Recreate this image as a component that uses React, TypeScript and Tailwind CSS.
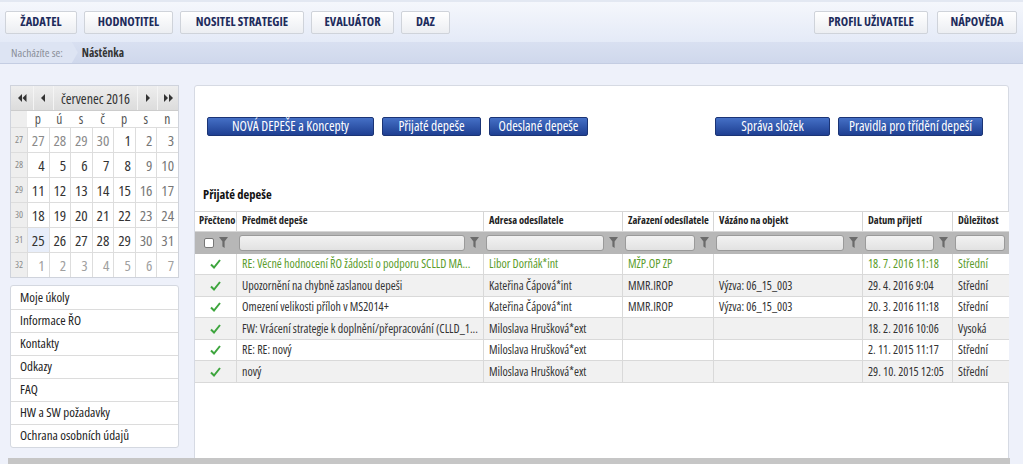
import React from "react";

const FONT = "font-['Open_Sans',Roboto,sans-serif] [font-stretch:75%]";

const topLeft = [
  { label: "ŽADATEL", w: "w-[72px]" },
  { label: "HODNOTITEL", w: "w-[89px]" },
  { label: "NOSITEL STRATEGIE", w: "w-[124px]" },
  { label: "EVALUÁTOR", w: "w-[83px]" },
  { label: "DAZ", w: "w-[49px]" },
];

const weeks: { n: number; days: { d: number; c: string }[] }[] = [
  { n: 27, days: [27, 28, 29, 30].map((d) => ({ d, c: "text-[#8a8a8a]" })).concat([{ d: 1, c: "text-[#333]" }, { d: 2, c: "text-[#777]" }, { d: 3, c: "text-[#777]" }]) },
  { n: 28, days: [4, 5, 6, 7, 8].map((d) => ({ d, c: "text-[#333]" })).concat([{ d: 9, c: "text-[#777]" }, { d: 10, c: "text-[#777]" }]) },
  { n: 29, days: [11, 12, 13, 14, 15].map((d) => ({ d, c: "text-[#333]" })).concat([{ d: 16, c: "text-[#777]" }, { d: 17, c: "text-[#777]" }]) },
  { n: 30, days: [18, 19, 20, 21, 22].map((d) => ({ d, c: "text-[#333]" })).concat([{ d: 23, c: "text-[#777]" }, { d: 24, c: "text-[#777]" }]) },
  { n: 31, days: [25, 26, 27, 28, 29].map((d) => ({ d, c: "text-[#333]" })).concat([{ d: 30, c: "text-[#777]" }, { d: 31, c: "text-[#777]" }]) },
  { n: 32, days: [1, 2, 3, 4, 5, 6, 7].map((d) => ({ d, c: "text-[#a0a0a0]" })) },
];

const menu = ["Moje úkoly", "Informace ŘO", "Kontakty", "Odkazy", "FAQ", "HW a SW požadavky", "Ochrana osobních údajů"];

const cols = [
  { label: "Přečteno", w: "w-[41px]" },
  { label: "Předmět depeše", w: "w-[247px]" },
  { label: "Adresa odesílatele", w: "w-[139px]" },
  { label: "Zařazení odesílatele", w: "w-[91px]" },
  { label: "Vázáno na objekt", w: "w-[149px]" },
  { label: "Datum přijetí", w: "w-[90px]" },
  { label: "Důležitost", w: "w-[57px]" },
];

const rows = [
  ["RE: Věcné hodnocení ŘO žádosti o podporu SCLLD MA...", "Libor Dorňák*int", "MŽP.OP ZP", "", "18. 7. 2016 11:18", "Střední"],
  ["Upozornění na chybně zaslanou depeši", "Kateřina Čápová*int", "MMR.IROP", "Výzva: 06_15_003", "29. 4. 2016 9:04", "Střední"],
  ["Omezení velikosti příloh v MS2014+", "Kateřina Čápová*int", "MMR.IROP", "Výzva: 06_15_003", "20. 3. 2016 11:18", "Střední"],
  ["FW: Vrácení strategie k doplnění/přepracování (CLLD_1...", "Miloslava Hrušková*ext", "", "", "18. 2. 2016 10:06", "Vysoká"],
  ["RE: RE: nový", "Miloslava Hrušková*ext", "", "", "2. 11. 2015 11:17", "Střední"],
  ["nový", "Miloslava Hrušková*ext", "", "", "29. 10. 2015 12:05", "Střední"],
];

const Funnel = () => (
  <svg width="9" height="11" viewBox="0 0 9 11" className="shrink-0">
    <path d="M0 0h9L5.6 4.6V11L3.4 9.6V4.6z" fill="#6b6b6b" />
  </svg>
);

const Check = () => (
  <svg width="11" height="10" viewBox="0 0 11 10">
    <path d="M1 5.5 4 8.5 10 1" fill="none" stroke="#3da53d" strokeWidth="2" />
  </svg>
);

const Tri = ({ dir, double }: { dir: "l" | "r"; double?: boolean }) => (
  <svg width={double ? 9 : 5} height="8" viewBox={double ? "0 0 9 8" : "0 0 5 8"}>
    {dir === "l" ? (
      <>
        <path d="M0 4 4 0v8z" fill="#333" />
        {double && <path d="M4.5 4 8.5 0v8z" fill="#333" />}
      </>
    ) : (
      <>
        <path d="M5 4 1 0v8z" fill="#333" transform={double ? "translate(-1 0)" : undefined} />
        {double && <path d="M9 4 5 0v8z" fill="#333" />}
      </>
    )}
  </svg>
);

const BlueBtn = ({ label, w }: { label: string; w: string }) => (
  <button className={`${w} h-[19px] rounded-[2px] border border-[#1b3475] bg-gradient-to-b from-[#4570c6] to-[#1f3f92] text-white text-[13.5px] font-medium leading-none whitespace-nowrap`}>
    {label}
  </button>
);

const topBtn = "h-[23px] rounded-[2px] border border-[#cfd3da] bg-gradient-to-b from-white to-[#eceef2] text-[12.5px] font-bold text-[#1e2c5c] whitespace-nowrap";

export default function App() {
  return (
    <div className={`${FONT} relative w-[1023px] h-[464px] overflow-hidden bg-[#eef1fa] text-[#222]`}>
      {/* top bar */}
      <div className="h-[42px] flex justify-between px-[5px] pt-[9px] border-t-2 border-[#e3e8f2] bg-gradient-to-b from-[#f5f7fc] to-[#e4eaf7]">
        <div className="flex gap-[7px]">
          {topLeft.map((b) => (
            <button key={b.label} className={`${b.w} ${topBtn}`}>
              {b.label}
            </button>
          ))}
        </div>
        <div className="flex gap-[9px] pr-[1px]">
          <button className={`w-[114px] ${topBtn}`}>PROFIL UŽIVATELE</button>
          <button className={`w-[80px] ${topBtn}`}>NÁPOVĚDA</button>
        </div>
      </div>

      {/* breadcrumb */}
      <div className="h-[22px] flex items-center bg-gradient-to-b from-[#d9e0f1] to-[#cfd8ec] border-b border-[#c4cde2] text-[11.5px]">
        <div className="relative h-full flex items-center pl-[11px] pr-[9px] bg-[#dde4f3] text-[#8a8f99]">
          Nacházíte se:
          <span className="absolute right-[-6px] top-0 h-full w-[6px] bg-[#dde4f3] [clip-path:polygon(0_0,100%_50%,0_100%)]" />
        </div>
        <div className="pl-[10px] font-bold text-[#333]">Nástěnka</div>
      </div>

      <div className="flex pt-[21px] pl-[10px]">
        {/* left column */}
        <div className="w-[169px] flex flex-col">
          <div className="border border-[#cfd3dc] bg-white">
            <div className="flex h-[25px] bg-gradient-to-b from-[#eeeeee] to-[#dcdcdc] border-b border-[#cccccc] text-[14px] text-[#333]">
              <div className="w-[23px] flex items-center justify-center border-r border-[#f4f4f4]"><Tri dir="l" double /></div>
              <div className="w-[20px] flex items-center justify-center border-r border-[#f4f4f4]"><Tri dir="l" /></div>
              <div className="w-[84px] flex items-center justify-center border-r border-[#f4f4f4] whitespace-nowrap">červenec 2016</div>
              <div className="w-[20px] flex items-center justify-center border-r border-[#f4f4f4]"><Tri dir="r" /></div>
              <div className="flex-1 flex items-center justify-center"><Tri dir="r" double /></div>
            </div>
            <div className="flex h-[16px] text-[13.5px] text-[#555]">
              <div className="w-[16px] bg-[#eeeeee]" />
              {["p", "ú", "s", "č", "p", "s", "n"].map((d, i) => (
                <div key={i} className="flex-1 flex items-center justify-center">{d}</div>
              ))}
            </div>
            {weeks.map((w) => (
              <div key={w.n} className="flex h-[25px] border-t border-[#dddddd]">
                <div className="w-[16px] bg-[#eeeeee] text-[9.5px] text-[#888] flex items-center justify-center">{w.n}</div>
                {w.days.map((d, i) => (
                  <div
                    key={i}
                    className={`flex-1 flex items-center justify-end pr-[4px] border-l border-[#dddddd] text-[15px] ${d.c} ${w.n === 31 && i === 0 ? "bg-[#e8eefa]" : ""}`}
                  >
                    {d.d}
                  </div>
                ))}
              </div>
            ))}
          </div>

          <div className="mt-[7px] border border-[#d4d8e0] rounded-[3px] bg-white">
            {menu.map((m, i) => (
              <div key={m} className={`h-[23px] flex items-center pl-[9px] text-[13px] text-[#222] ${i > 0 ? "border-t border-[#dcdcdc]" : ""}`}>
                {m}
              </div>
            ))}
          </div>
        </div>

        {/* main panel */}
        <div className="ml-[15px] w-[815px] h-[380px] bg-white border border-[#d6dae3] rounded-tl-[3px] rounded-tr-[3px]">
          <div className="flex pl-[12px] pt-[31px] pr-[25px]">
            <div className="flex gap-[8px]">
              <BlueBtn label="NOVÁ DEPEŠE a Koncepty" w="w-[167px]" />
              <BlueBtn label="Přijaté depeše" w="w-[99px]" />
              <BlueBtn label="Odeslané depeše" w="w-[99px]" />
            </div>
            <div className="ml-auto flex gap-[8px]">
              <BlueBtn label="Správa složek" w="w-[115px]" />
              <BlueBtn label="Pravidla pro třídění depeší" w="w-[145px]" />
            </div>
          </div>

          <div className="pl-[8px] pt-[50px] pb-[6px] text-[12.5px] font-bold text-[#111]">Přijaté depeše</div>

          {/* table */}
          <div className="w-[814px] text-[12px]">
            <div className="flex h-[21px] border-t border-b border-[#d6d6d6] bg-white">
              {cols.map((c, i) => (
                <div key={c.label} className={`${c.w} flex items-center whitespace-nowrap overflow-hidden text-[10.5px] font-bold text-[#222] ${i > 0 ? "pl-[5px] border-l border-[#d6d6d6]" : "pl-[4px]"}`}>
                  {c.label}
                </div>
              ))}
            </div>
            <div className="flex h-[22px] bg-[#b7b7b7]">
              {cols.map((c, i) => (
                <div key={c.label} className={`${c.w} flex items-center gap-[5px] pl-[3px] pr-[4px]`}>
                  {i === 0 ? (
                    <>
                      <span className="ml-[6px] w-[10px] h-[10px] rounded-[2px] border border-[#777] bg-white" />
                      <Funnel />
                    </>
                  ) : (
                    <>
                      <span className="flex-1 h-[16px] rounded-[3px] border border-[#9a9a9a] bg-gradient-to-b from-[#f2f2f2] to-[#e2e2e2]" />
                      {i < 6 && <Funnel />}
                    </>
                  )}
                </div>
              ))}
            </div>
            {rows.map((r, ri) => (
              <div
                key={ri}
                className={`flex h-[21.5px] border-b border-[#d9d9d9] ${ri % 2 === 1 ? "bg-[#f1f1f1]" : "bg-white"} ${ri === 0 ? "text-[#5b9c2b]" : "text-[#333]"}`}
              >
                <div className={`${cols[0].w} flex items-center justify-center`}>
                  <Check />
                </div>
                {r.map((v, ci) => (
                  <div key={ci} className={`${cols[ci + 1].w} flex items-center pl-[5px] border-l border-[#d9d9d9] whitespace-nowrap overflow-hidden`}>
                    {v}
                  </div>
                ))}
              </div>
            ))}
          </div>
        </div>
      </div>

      {/* bottom scrollbar */}
      <div className="absolute left-[8px] bottom-0 w-[1002px] h-[6px] bg-[#c6c6c6]" />
    </div>
  );
}
